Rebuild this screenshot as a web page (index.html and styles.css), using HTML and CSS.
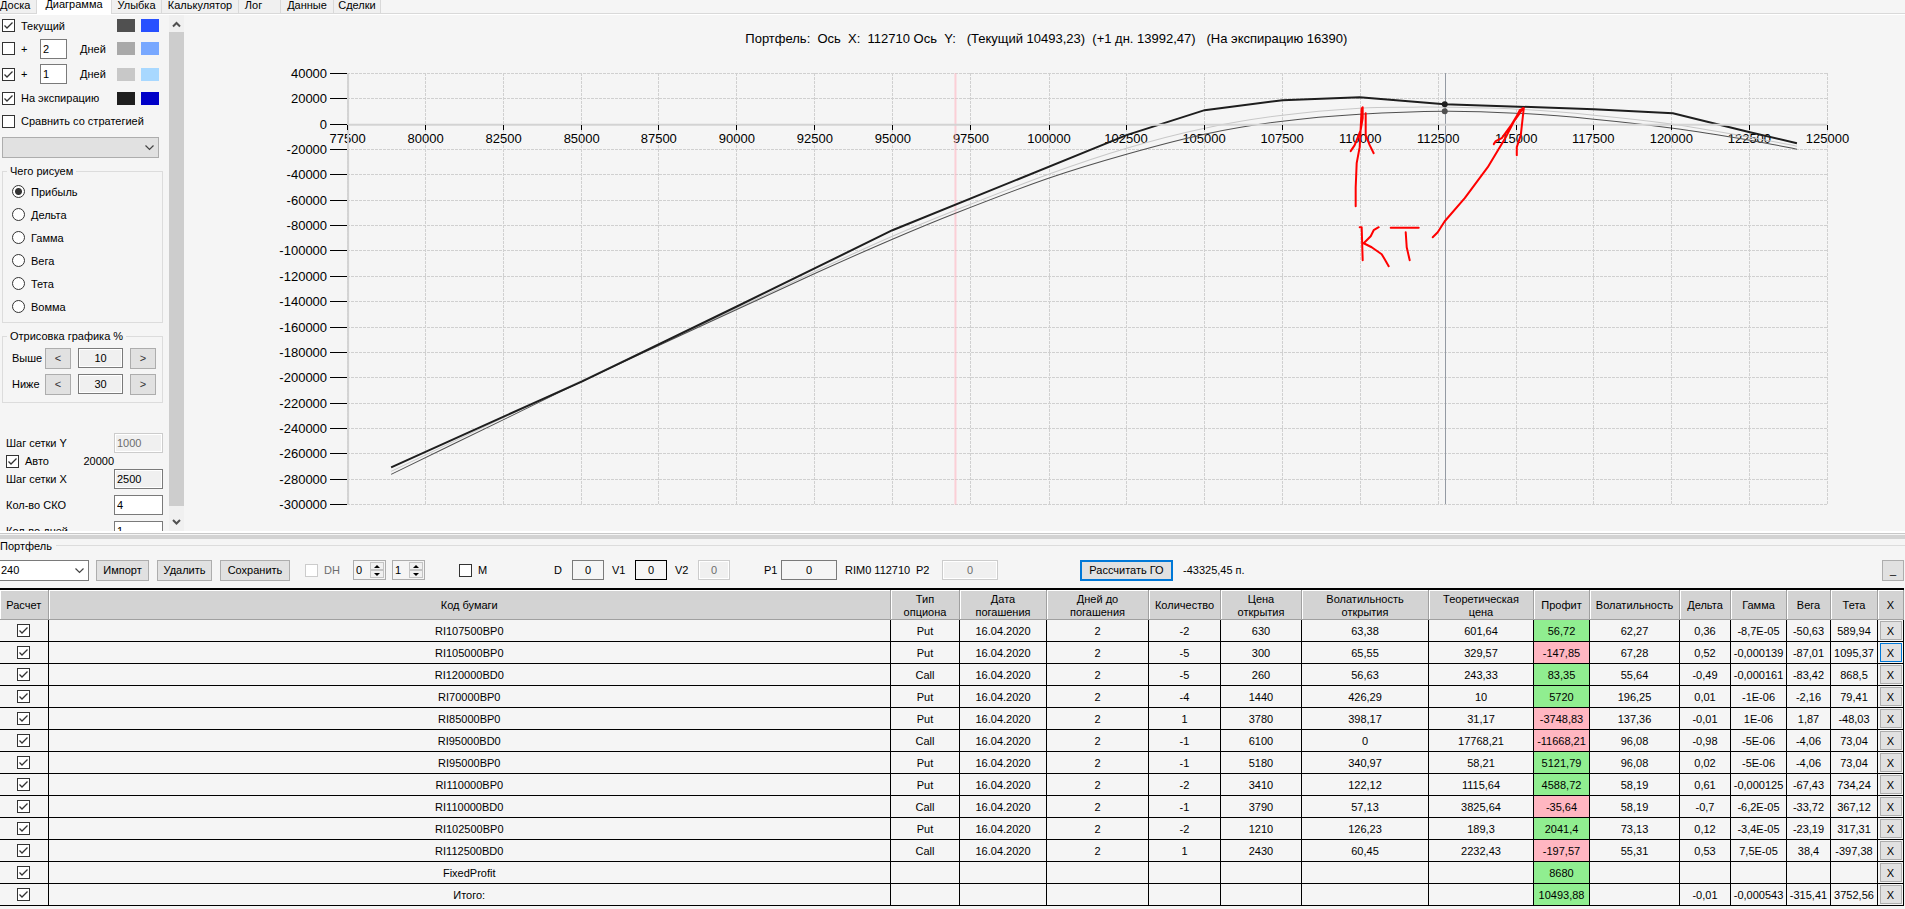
FILE: index.html
```
<!DOCTYPE html>
<html lang="ru">
<head>
<meta charset="utf-8">
<title>Портфель опционов</title>
<link rel="stylesheet" href="styles.css">
</head>
<body>
<nav class="tabs">
  <button class="tab tab-first">Доска</button>
  <button class="tab tab-active">Диаграмма</button>
  <button class="tab tab-smile">Улыбка</button>
  <button class="tab tab-calc">Калькулятор</button>
  <button class="tab tab-log">Лог</button>
  <button class="tab tab-data">Данные</button>
  <button class="tab tab-deals">Сделки</button>
</nav>
<main class="upper">
  <aside class="sidebar">
    <div class="settings">
      <div class="series series-first"><label class="check"><input type="checkbox" checked>Текущий</label><i class="swatch c1"></i><i class="swatch c2"></i></div>
      <div class="series"><label class="check plus"><input type="checkbox">+</label><input class="field days" value="2" aria-label="Дней вперёд, первая линия"><span class="unit">Дней</span><i class="swatch c3"></i><i class="swatch c4"></i></div>
      <div class="series"><label class="check plus"><input type="checkbox" checked>+</label><input class="field days" value="1" aria-label="Дней вперёд, вторая линия"><span class="unit">Дней</span><i class="swatch c5"></i><i class="swatch c6"></i></div>
      <div class="series series-short"><label class="check"><input type="checkbox" checked>На экспирацию</label><i class="swatch c7"></i><i class="swatch c8"></i></div>
      <div class="series series-last"><label class="check"><input type="checkbox">Сравнить со стратегией</label></div>
      <select class="combo strategy" aria-label="Стратегия"><option></option></select>
      <fieldset class="group kinds">
        <legend>Чего рисуем</legend>
        <label class="radio"><input type="radio" name="kind" checked>Прибыль</label>
        <label class="radio"><input type="radio" name="kind">Дельта</label>
        <label class="radio"><input type="radio" name="kind">Гамма</label>
        <label class="radio"><input type="radio" name="kind">Вега</label>
        <label class="radio"><input type="radio" name="kind">Тета</label>
        <label class="radio"><input type="radio" name="kind">Вомма</label>
      </fieldset>
      <fieldset class="group range">
        <legend>Отрисовка графика %</legend>
        <div class="range-row"><label for="above">Выше</label><button class="btn">&lt;</button><input class="field muted" id="above" value="10"><button class="btn">&gt;</button></div>
        <div class="range-row"><label for="below">Ниже</label><button class="btn">&lt;</button><input class="field muted" id="below" value="30"><button class="btn">&gt;</button></div>
      </fieldset>
      <div class="params">
        <div class="param"><label for="stepy">Шаг сетки Y</label><input class="field" id="stepy" value="1000" disabled></div>
        <div class="param auto"><label class="check"><input type="checkbox" checked>Авто</label><span>20000</span></div>
        <div class="param param-gap"><label for="stepx">Шаг сетки X</label><input class="field muted" id="stepx" value="2500"></div>
        <div class="param param-gap"><label for="sko">Кол-во СКО</label><input class="field" id="sko" value="4"></div>
        <div class="param"><label for="dayn">Кол-во дней</label><input class="field" id="dayn" value="1"></div>
      </div>
    </div>
    <div class="scrollbar">
      <svg viewBox="0 0 15 17"><path d="M4 11.5 7.5 8 11 11.5"/></svg>
      <div class="thumb"></div>
      <svg class="down" viewBox="0 0 15 17" preserveAspectRatio="xMidYMax meet"><path d="M4 6 7.5 9.5 11 6"/></svg>
    </div>
  </aside>
  <svg class="chart" id="chart" viewBox="185 15 1720 515" role="img" aria-label="График прибыли портфеля"></svg>
</main>
<div class="splitter"></div>
<section class="lower">
  <div class="caption"><span>Портфель</span></div>
  <div class="toolbar">
    <select class="combo portfolio" aria-label="Портфель"><option>240</option></select>
    <button class="btn b-import">Импорт</button>
    <button class="btn b-delete">Удалить</button>
    <button class="btn b-save">Сохранить</button>
    <label class="check off"><input type="checkbox" disabled>DH</label>
    <span class="spin"><input value="0" aria-label="DH от"><span class="arrows"><button aria-label="Больше"></button><button aria-label="Меньше"></button></span></span>
    <span class="spin"><input value="1" aria-label="DH шаг"><span class="arrows"><button aria-label="Больше"></button><button aria-label="Меньше"></button></span></span>
    <label class="check"><input type="checkbox">M</label>
    <label for="d">D</label><input class="field num" id="d" value="0">
    <label for="v1">V1</label><input class="field num strong" id="v1" value="0">
    <label for="v2">V2</label><input class="field num" id="v2" value="0" disabled>
    <label for="p1">P1</label><input class="field num wide" id="p1" value="0">
    <span>RIM0 112710</span>
    <label for="p2">P2</label><input class="field num wide" id="p2" value="0" disabled>
    <button class="btn b-calc">Рассчитать ГО</button>
    <span>-43325,45 п.</span>
    <button class="btn b-min">_</button>
  </div>
  <table class="grid">
    <colgroup><col class="w49"><col><col class="w69"><col class="w87"><col class="w102"><col class="w72"><col class="w81"><col class="w127"><col class="w105"><col class="w56"><col class="w90"><col class="w51"><col class="w56"><col class="w44"><col class="w47"><col class="w26"></colgroup>
    <thead><tr><th>Расчет</th><th>Код бумаги</th><th>Тип<br>опциона</th><th>Дата<br>погашения</th><th>Дней до<br>погашения</th><th>Количество</th><th>Цена<br>открытия</th><th>Волатильность<br>открытия</th><th>Теоретическая<br>цена</th><th>Профит</th><th>Волатильность</th><th>Дельта</th><th>Гамма</th><th>Вега</th><th>Тета</th><th>X</th></tr></thead>
    <tbody id="rows"></tbody>
  </table>
</section>
<script src="app.js"></script>
</body>
</html>
```
FILE: app.js
```
const D = '16.04.2020';
const rows = [
  ['RI107500BP0','Put',D,'2','-2','630','63,38','601,64','56,72','62,27','0,36','-8,7E-05','-50,63','589,94'],
  ['RI105000BP0','Put',D,'2','-5','300','65,55','329,57','-147,85','67,28','0,52','-0,000139','-87,01','1095,37'],
  ['RI120000BD0','Call',D,'2','-5','260','56,63','243,33','83,35','55,64','-0,49','-0,000161','-83,42','868,5'],
  ['RI70000BP0','Put',D,'2','-4','1440','426,29','10','5720','196,25','0,01','-1E-06','-2,16','79,41'],
  ['RI85000BP0','Put',D,'2','1','3780','398,17','31,17','-3748,83','137,36','-0,01','1E-06','1,87','-48,03'],
  ['RI95000BD0','Call',D,'2','-1','6100','0','17768,21','-11668,21','96,08','-0,98','-5E-06','-4,06','73,04'],
  ['RI95000BP0','Put',D,'2','-1','5180','340,97','58,21','5121,79','96,08','0,02','-5E-06','-4,06','73,04'],
  ['RI110000BP0','Put',D,'2','-2','3410','122,12','1115,64','4588,72','58,19','0,61','-0,000125','-67,43','734,24'],
  ['RI110000BD0','Call',D,'2','-1','3790','57,13','3825,64','-35,64','58,19','-0,7','-6,2E-05','-33,72','367,12'],
  ['RI102500BP0','Put',D,'2','-2','1210','126,23','189,3','2041,4','73,13','0,12','-3,4E-05','-23,19','317,31'],
  ['RI112500BD0','Call',D,'2','1','2430','60,45','2232,43','-197,57','55,31','0,53','7,5E-05','38,4','-397,38'],
  ['FixedProfit','','','','','','','','8680','','','','',''],
  ['Итого:','','','','','','','','10493,88','','-0,01','-0,000543','-315,41','3752,56']
];
document.getElementById('rows').innerHTML = rows.map((r, i) =>
  '<tr><td><input type="checkbox" checked aria-label="' + r[0] + '"></td>' +
  r.map((v, c) => '<td' + (c === 8 ? ' class="' + (v[0] === '-' ? 'loss' : 'gain') + '"' : '') + '>' + v + '</td>').join('') +
  '<td class="del"><button class="x' + (i === 1 ? ' focus' : '') + '">X</button></td></tr>').join('');

// Chart: price on X from 77500 to 125000, profit on Y from 40000 to -300000
const X0 = 348, X1 = 1827, Y0 = 73, Y1 = 504;
let out = '<text class="title" x="746" y="43">Портфель:  Ось  X:  112710 Ось  Y:   (Текущий 10493,23)  (+1 дн. 13992,47)   (На экспирацию 16390)</text>';
for (let i = 0; i <= 17; i++) {
  const y = Math.round(Y0 + (Y1 - Y0) * i / 17) + 0.5;
  out += `<path class="dash" d="M${X0} ${y}H${X1}"/><path class="tick" d="M331 ${y}H${X0}"/><text class="ylab" x="328" y="${y + 4}">${40000 - i * 20000}</text>`;
}
let ticks = '';
for (let i = 0; i <= 19; i++) {
  const x = Math.round(X0 + (X1 - X0) * i / 19) + 0.5;
  out += `<path class="dash" d="M${x} ${Y0}V${Y1}"/><text class="xlab" x="${x}" y="143">${77500 + i * 2500}</text>`;
  ticks += `<path class="tick" d="M${x} 125V130"/>`;
}
out += `<path class="yaxis" d="M349 ${Y0}V${Y1}"/>`;
// Smooth line through the sampled points
function curve(p) {
  let d = 'M' + p[0];
  for (let i = 0; i < p.length - 1; i++) {
    const a = p[i - 1] || p[i], b = p[i], c = p[i + 1], e = p[i + 2] || c;
    d += `C${b[0] + (c[0] - a[0]) / 6} ${b[1] + (c[1] - a[1]) / 6} ${c[0] - (e[0] - b[0]) / 6} ${c[1] - (e[1] - b[1]) / 6} ${c}`;
  }
  return d;
}
const plusOne = [[392,471],[505,417],[583,380],[660,344],[738,308],[816,271],[893,236],[956,210],[1049,174],[1127,148],[1205,128],[1283,115],[1360,108],[1413,107],[1445,107],[1516,109],[1594,115],[1673,124],[1750,137],[1797,146]];
const current = [[392,474],[505,419],[583,381],[660,345],[738,309],[816,273],[893,239],[956,213],[1049,178],[1127,154],[1205,134],[1283,121],[1360,114],[1445,111],[1516,113],[1594,119],[1673,128],[1750,140],[1797,149]];
out += `<path class="pink" d="M956 ${Y0}V${Y1}"/><path class="cursor" d="M1445.5 ${Y0}V${Y1}"/>
<path class="line plus-one" d="${curve(plusOne)}"/><path class="line cur" d="${curve(current)}"/>
<path class="line exp" d="M392 467 505 416 583 381 738 306 893 230 1127 135 1205 110 1283 100 1360 97 1445 104 1594 109 1673 113 1750 132 1797 143"/>
<path class="xaxis" d="M${X0} 124.500H${X1}"/>${ticks}
<circle class="dot1" cx="1445" cy="104" r="3"/><circle class="dot2" cx="1445" cy="111" r="3"/>
<g class="ink">
<path d="M1356 206 1356 187 1357 163 1360 147 1361 128 1362 108M1363 107 1363 118 1361 130 1355 145 1351 151M1366 113 1366 135 1370 145 1374 153"/>
<path d="M1360 227H1362L1363 260M1379 227 1374 230 1371 236 1364 243 1372 247 1382 254 1385 259 1389 266M1391 227.500H1419M1406 232 1407 247 1410 260"/>
<path d="M1433 237 1438 232 1445 221 1465 198 1488 167 1506 137 1520 110 1524 108 1521 135 1517 147 1517 155M1523 108 1520 113 1510 127 1502 138 1496 141 1494 144M1518 114 1512 124"/>
</g>`;
document.getElementById('chart').innerHTML = out;
```
FILE: styles.css
```
* { box-sizing: border-box; }
body {
  margin: 0;
  height: 100vh;
  display: flex;
  flex-direction: column;
  overflow: hidden;
  background: #f5f5f5;
  color: #000;
  font: 11px/14px "Liberation Sans", Arial, sans-serif;
}
button, input, select { font: inherit; color: inherit; margin: 0; border-radius: 0; }
.tabs { display: flex; flex: none; height: 14px; border-bottom: 1px solid #d9d9d9; }
.tab {
  height: 13px; padding: 0; border: 0; border-right: 1px solid #d9d9d9;
  background: #f0f0f0; line-height: 11px; white-space: nowrap;
  display: flex; align-items: flex-start; justify-content: center;
}
.tab-first { width: 37px; justify-content: flex-start; }
.tab-active { width: 75px; height: 14px; background: #fff; line-height: 8px; }
.tab-smile { width: 50px; }
.tab-calc { width: 77px; }
.tab-log { width: 42px; padding-right: 12px; }
.tab-data { width: 53px; }
.tab-deals { width: 47px; }

.upper { display: flex; flex: 1 1 0; min-height: 0; overflow: hidden; border-top: 1px solid #fff; }
.sidebar { display: flex; flex: none; width: 184px; overflow: hidden; }
.settings { flex: 1; padding: 0 6px 0 2px; overflow: hidden; }
.scrollbar { flex: none; width: 15px; display: flex; flex-direction: column; background: #f0f0f0; }
.scrollbar svg { height: 17px; fill: none; stroke: #505050; stroke-width: 2; }
.scrollbar .down { height: 25px; }
.thumb { flex: 1; background: #cdcdcd; }
.chart { flex: 1; min-width: 0; height: 100%; }

.check, .radio { display: flex; align-items: center; gap: 6px; white-space: nowrap; flex: 1; }
input[type=checkbox], input[type=radio] {
  appearance: none; flex: none; width: 13px; height: 13px; border: 1px solid #333; background: #fff center/11px no-repeat;
}
input[type=radio] { border-radius: 50%; }
input[type=checkbox]:checked { background-image: url("data:image/svg+xml,%3Csvg xmlns='http://www.w3.org/2000/svg' viewBox='0 0 11 11'%3E%3Cpath d='M1.500 5.500 4 8 9.500 2.500' fill='none' stroke='%23333' stroke-width='1.300'/%3E%3C/svg%3E"); }
input[type=radio]:checked { background-image: radial-gradient(circle, #333 3px, transparent 4px); }
input[type=checkbox]:disabled { border-color: #ccc; }
.off { color: #6d6d6d; }

.series { display: flex; align-items: center; height: 26px; padding-right: 4px; }
.series-first { height: 21px; }
.series-first + .series { height: 25px; }
.series-short { height: 22px; }
.series-last { height: 24px; margin-bottom: 4px; }
.plus { flex: 0 0 38px; }
.days { width: 27px; margin-right: 13px; }
.unit { flex: 1; }
.swatch { width: 18px; height: 13px; margin-left: 6px; }
.c1 { background: #505050; } .c2 { background: #2850ff; }
.c3 { background: #a9a9a9; } .c4 { background: #78a8ff; }
.c5 { background: #c8c8c8; } .c6 { background: #a8d8ff; }
.c7 { background: #1e1e1e; } .c8 { background: #0000c8; }

.field { height: 20px; padding: 0 2px; border: 1px solid #7a7a7a; background: #fff; min-width: 0; outline: 0; }
.muted { background: #f0f0f0; box-shadow: inset 0 0 0 1px #fff; }
.field:disabled { background: #f0f0f0; border-color: #ccc; color: #6d6d6d; box-shadow: inset 0 0 0 1px #fff; }
.btn { height: 21px; padding: 0; border: 1px solid #adadad; background: #e1e1e1; text-align: center; white-space: nowrap; }
.combo {
  display: block; appearance: none; height: 21px; border: 1px solid #adadad; padding: 0 0 0 1px;
  background: #e1e1e1 right 3px center/11px no-repeat url("data:image/svg+xml,%3Csvg xmlns='http://www.w3.org/2000/svg' viewBox='0 0 11 11'%3E%3Cpath d='M1.500 3.500 5.500 7.500 9.500 3.500' fill='none' stroke='%23444' stroke-width='1.200'/%3E%3C/svg%3E");
}
.strategy { width: 157px; margin-bottom: 6px; }

.group { margin: 0 0 6px; padding: 2px 0 4px 9px; border: 1px solid #dcdcdc; min-width: 0; }
.group legend { padding: 0 3px; margin-left: -5px; height: 14px; }
.radio { height: 23px; }
.range { padding-bottom: 5px; margin-bottom: 30px; }
.range-row { display: flex; align-items: center; height: 26px; }
.range-row label { width: 33px; }
.range-row .btn { width: 26px; color: #333; }
.range-row .field { width: 45px; margin: 0 7px; text-align: center; }
.params { padding-left: 4px; }
.param { display: flex; align-items: center; justify-content: space-between; height: 20px; white-space: nowrap; }
.param .field { width: 49px; }
.param-gap { margin-bottom: 6px; }
.auto { height: 16px; padding-right: 49px; }

.title, .xlab, .ylab { font-size: 13px; white-space: pre; }
.xlab { text-anchor: middle; }
.ylab { text-anchor: end; }
.dash { stroke: #d0d0d0; stroke-dasharray: 3 1; shape-rendering: crispEdges; }
.tick { stroke: #000; shape-rendering: crispEdges; }
.yaxis { stroke: #d3d3d3; stroke-width: 2; }
.xaxis { stroke: #d3d3d3; stroke-width: 2; }
.pink { stroke: #ffb6c1; stroke-opacity: .6; stroke-width: 2; }
.cursor { stroke: #949aa3; shape-rendering: crispEdges; }
.line { fill: none; }
.plus-one { stroke: #c8c8c8; }
.cur { stroke: #505050; }
.exp { stroke: #1e1e1e; stroke-width: 2; }
.dot1 { fill: #1e1e1e; }
.dot2 { fill: #505050; }
.ink { fill: none; stroke: #f00; stroke-width: 2; stroke-linecap: round; stroke-linejoin: round; }

.splitter { flex: none; height: 8px; background: #d3d3d3; border-top: 2px solid #fff; box-shadow: inset 0 1px #c8c8c8, inset 0 2px #f5f5f5; }
.lower { flex: none; padding-bottom: 3px; }
.caption { display: flex; align-items: center; gap: 4px; height: 14px; }
.caption::after { content: ""; flex: 1; height: 1px; background: #dcdcdc; }
.toolbar {
  display: grid; align-items: center; height: 35px; white-space: nowrap;
  grid-template-columns: 96px 61px 63px 85px 48px 39px 67px 95px 18px 40px 23px 40px 23px 66px 17px 64px 71px 26px 138px 103px 1fr 23px;
}
.portfolio { width: 90px; margin-left: -1px; border-color: #7a7a7a; background-color: #fff; }
.b-import { width: 53px; } .b-delete { width: 55px; } .b-save { width: 70px; }
.b-calc { width: 93px; border: 2px solid #0078d7; }
.b-min { width: 22px; }
.num { width: 32px; text-align: center; background: #f5f5f5; }
.strong { border-color: #000; }
.wide { width: 56px; }
.spin { display: flex; width: 33px; height: 20px; border: 1px solid #adadad; padding: 1px; }
.spin input { width: 15px; min-width: 0; flex: 1; padding: 0 1px; border: 0; background: none; }
.arrows { width: 14px; display: grid; }
.arrows button { padding: 0; border: 1px solid #c4c4c4; background: #f0f0f0; display: flex; align-items: center; justify-content: center; }
.arrows button::before { content: ""; border: 3px solid transparent; border-top-width: 0; border-bottom-color: #000; }
.arrows button + button::before { border-top: 3px solid #000; border-bottom-width: 0; }

.grid { width: calc(100% - 1px); table-layout: fixed; border-collapse: collapse; border-top: 2px solid #000; }
.grid th {
  height: 31px; padding: 3px 0 0; font-weight: normal; line-height: 13px; background: #d3d3d3;
  border-right: 1px solid #a0a0a0; border-bottom: 1px solid #a0a0a0; box-shadow: inset 1px 1px #fff; white-space: nowrap;
}
.grid td { height: 22px; padding: 0; text-align: center; line-height: 14px; border-right: 1px solid #000; border-bottom: 1px solid #000; white-space: nowrap; }
.grid td input { display: block; margin: 0 auto; }
.gain { background: #90ee90; }
.loss { background: #ffb6c1; }
.x { display: block; width: 22px; height: 19px; margin: 0 auto; padding: 0; border: 1px solid #adadad; background: #e1e1e1; }
.focus { border-color: #0078d7; }
.w49 { width: 48px; } .w69 { width: 69px; } .w87 { width: 87px; } .w102 { width: 102px; }
.w72 { width: 72px; } .w81 { width: 81px; } .w127 { width: 127px; } .w105 { width: 105px; }
.w56 { width: 56px; } .w90 { width: 90px; } .w51 { width: 51px; } .w44 { width: 44px; }
.w47 { width: 47px; } .w26 { width: 26px; }
```
